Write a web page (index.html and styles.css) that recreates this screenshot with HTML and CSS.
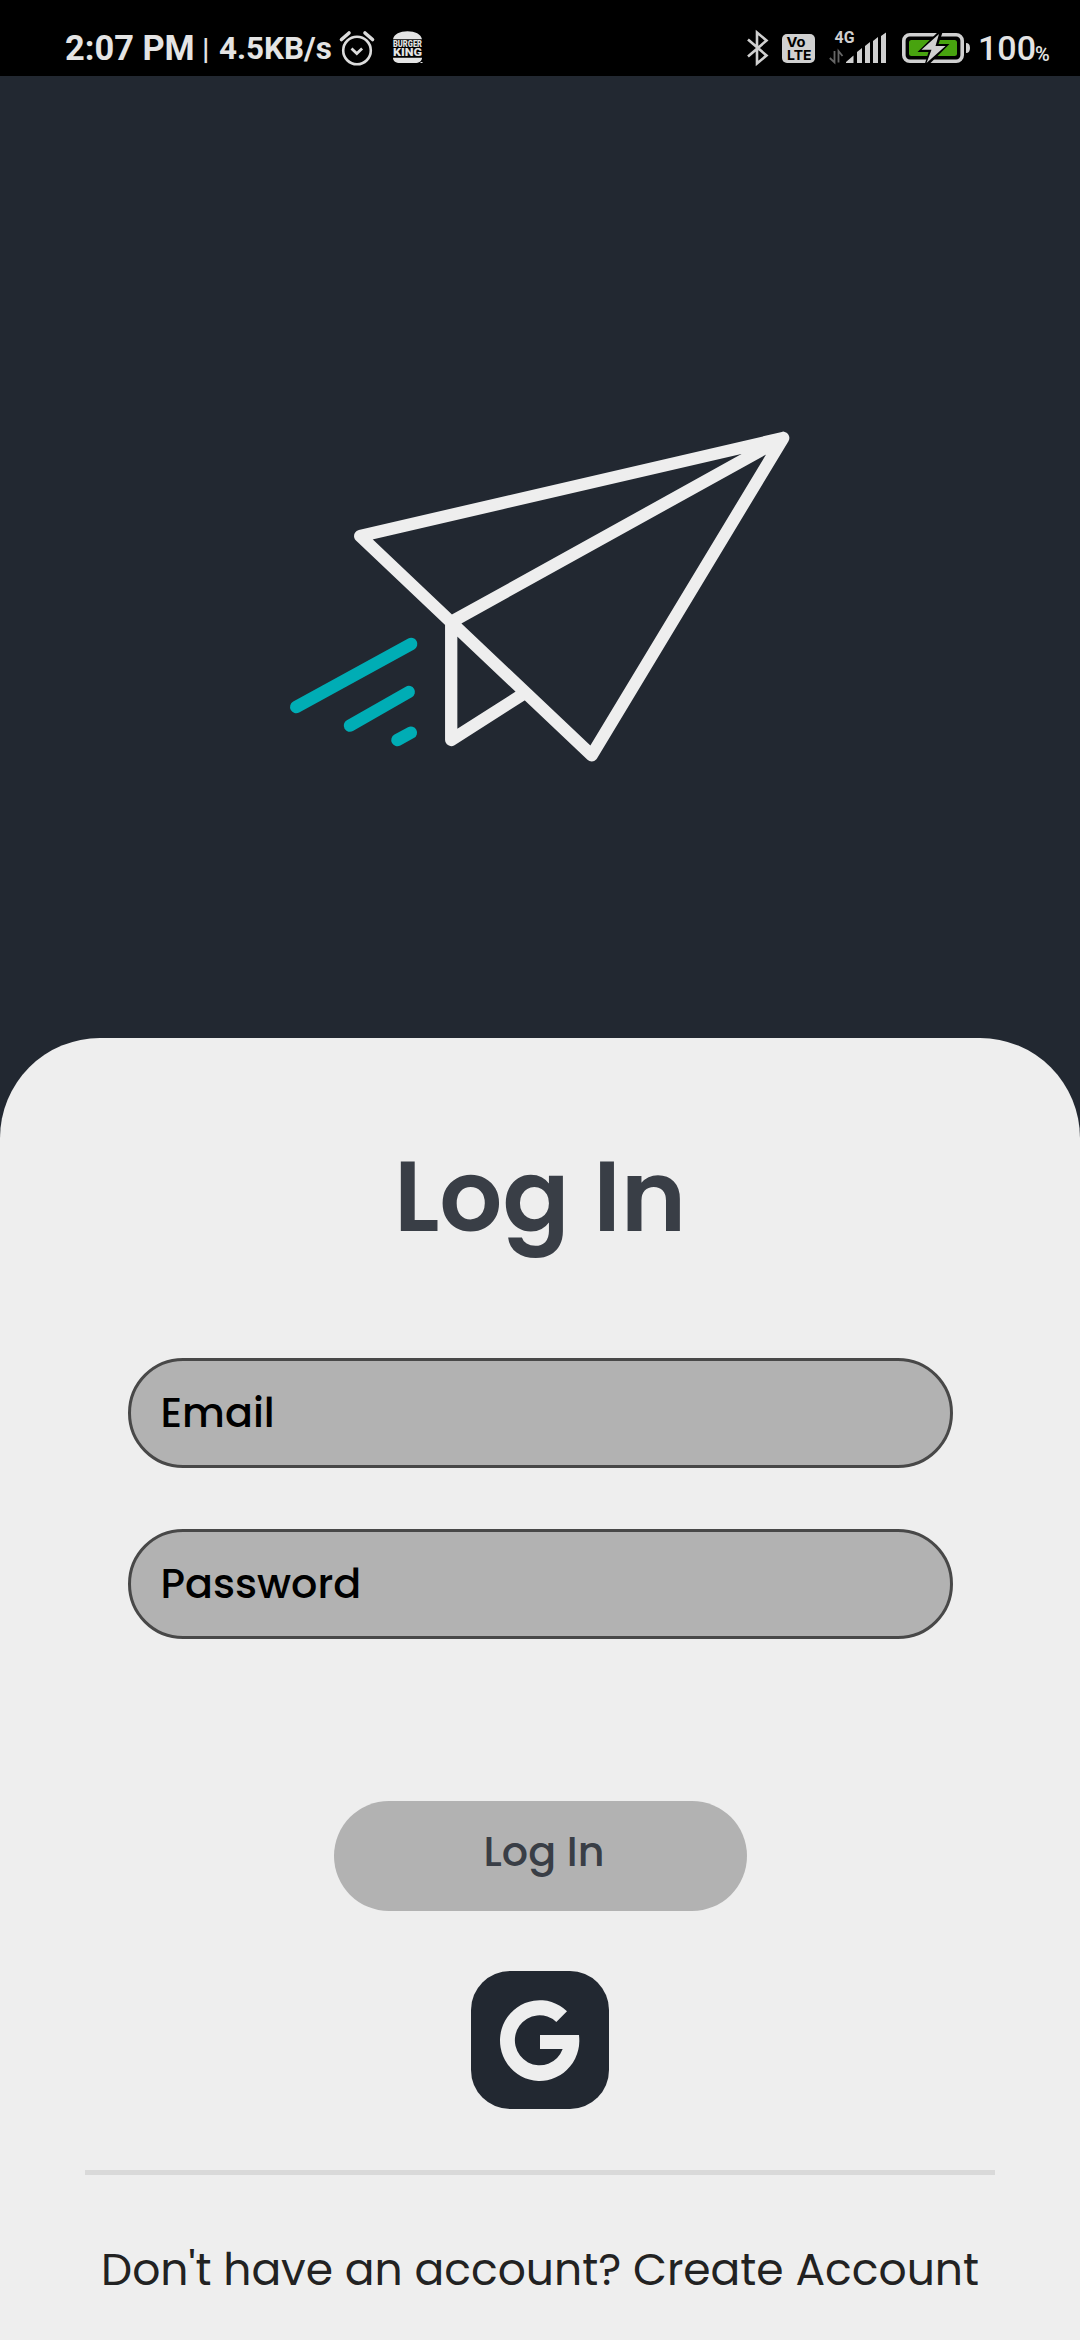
FILE: index.html
```html
<!DOCTYPE html>
<html lang="en">
<head>
<meta charset="utf-8">
<title>Log In</title>
<link rel="stylesheet" href="styles.css">
</head>
<body>
<div class="app">
  <header class="status">
    <span class="status-time">2:07 PM</span>
    <span class="status-sep">|</span>
    <span class="status-rate">4.5KB/s</span>
    <svg class="icon-alarm" viewBox="0 0 36 36" width="36" height="36" fill="none" stroke="#dcdcdc">
      <circle cx="18" cy="20.5" r="13.8" stroke-width="2.6"/>
      <path d="M12.5 18.5l5.300 5 5.300-5" stroke-width="2.8"/>
      <path d="M2.500 9.500l7.500-6.500M33.500 9.500l-7.500-6.500" stroke-width="3.600" stroke-linecap="round"/>
    </svg>
    <svg class="icon-burger" viewBox="0 0 32 34" width="32" height="34" fill="#e4e4e4">
      <path d="M1 8.300C2 3 8 .3 15.500 .3S29 3 30 8.300zM1 26.700h29c0 3.500-3 5.300-7 5.300H8c-4 0-7-1.800-7-5.300zM28.500 31h2v1h-2z"/>
      <text x="1" y="16" font-size="8.600" textLength="29" lengthAdjust="spacingAndGlyphs">BURGER</text>
      <text x="1" y="25.200" font-size="11.400" textLength="29" lengthAdjust="spacingAndGlyphs">KING</text>
    </svg>
    <svg class="icon-bluetooth" viewBox="0 0 22 36" width="22" height="36" fill="none" stroke="#d0d0d0" stroke-width="2.600">
      <path d="M1 9.500l18.500 16L10 33.500V2.500L19.500 10.500 1 26.500"/>
    </svg>
    <svg class="icon-volte" viewBox="0 0 33 29" width="33" height="29">
      <rect width="33" height="29" rx="5" fill="#d0d0d0"/>
      <text x="4.500" y="13" font-size="13" textLength="19" lengthAdjust="spacingAndGlyphs">Vo</text>
      <text x="5" y="26" font-size="13.500" textLength="24.500" lengthAdjust="spacingAndGlyphs">LTE</text>
    </svg>
    <svg class="icon-signal" viewBox="0 0 58 34" width="58" height="34" fill="#d0d0d0">
      <text x="5.500" y="12" font-size="16" textLength="20" lengthAdjust="spacingAndGlyphs">4G</text>
      <path d="M5.500 20v11.500L.8 27M9.500 31.500V20l4 5" fill="none" stroke="#666" stroke-width="1.800"/>
      <path d="M17 32v-1l7.500-6.500V32zM28 21l5-4v15h-5zM36 15l5-4v21h-5zM44 10l5-4v26h-5zM52 5l5-3.500V32h-5z"/>
    </svg>
    <svg class="icon-battery" viewBox="0 0 68 34" width="68" height="34">
      <rect x="1.800" y="3.800" width="58.400" height="26.400" rx="6" fill="none" stroke="#d0d0d0" stroke-width="3.600"/>
      <rect x="7" y="9" width="48" height="16" rx="2.500" fill="#48a30f"/>
      <path d="M64 12q4 0 4 5t-4 5z" fill="#d0d0d0"/>
      <path d="M37 0L15.500 21h11L22.500 34h4L47.500 13H36.500L41 0z" fill="#000"/>
      <path d="M37 3L19.500 18.800h10L24.500 32 43.500 15H33.500z" fill="#d0d0d0"/>
    </svg>
    <span class="status-level">100</span>
    <span class="status-percent">%</span>
  </header>

  <div class="hero">
    <svg class="plane" viewBox="280 420 520 350" width="520" height="350" fill="none" stroke-width="12.300" stroke-linecap="round" stroke-linejoin="round">
      <path stroke="#eee" d="M783.200 438L360.200 536 591.700 755.300zL451.200 622V740L525.600 692.500"/>
      <path stroke="#00adb5" d="M411.200 644L296.200 707M408.800 692L349.900 725.700M410.900 732.700L397.400 740"/>
    </svg>
  </div>

  <main class="panel">
    <h1 class="title">Log In</h1>
    <form class="form">
      <div class="field">Email</div>
      <div class="field">Password</div>
      <button class="submit" type="button">Log In</button>
    </form>
    <a class="google">
      <svg viewBox="453 573 414 414" width="138" height="138" fill="#eee">
        <path d="M741 694A119 121 0 1 0 778 783Q778 774 777 765H660V807H728A74 75 0 1 1 709 726Z"/>
      </svg>
    </a>
    <hr class="rule">
    <p class="signup">Don't have an account? Create Account</p>
  </main>
</div>
</body>
</html>
```
FILE: styles.css
```css
* { box-sizing: border-box; }

body {
  margin: 0;
  background: #222831;
}

.app {
  width: 1080px;
  height: 2340px;
  display: flex;
  flex-direction: column;
  overflow: hidden;
  font-family: Poppins, Inter, "Open Sans", sans-serif;
  font-feature-settings: "cv11" 1;
}

/* Status bar */
.status {
  height: 76px;
  flex: none;
  display: flex;
  align-items: center;
  padding: 20px 0 0 65px;
  background: #000;
  color: #e4e4e4;
  font-family: Roboto, sans-serif;
  font-weight: 700;
  white-space: nowrap;
}

.status > * { flex: none; }
.status svg { overflow: visible; }
.status-time { width: 137px; font-size: 34.400px; }
.status-sep { width: 17px; font-size: 30px; font-weight: 500; }
.status-rate { width: 120px; font-size: 31.400px; }
.icon-burger { margin-left: 17px; font-weight: 900; }
.icon-bluetooth { margin-left: 323px; }
.icon-volte { margin-left: 13px; font-family: Inter, sans-serif; }
.icon-signal { margin-left: 14px; }
.icon-battery { margin-left: 15px; }
.status-level { width: 57px; margin-left: 8px; font-size: 34px; font-weight: 500; }
.status-percent { padding-top: 12px; font-size: 20px; font-weight: 500; }

/* Illustration */
.hero {
  height: 962px;
  flex: none;
  display: flex;
  justify-content: center;
  align-items: flex-start;
  padding-top: 344px;
}

/* Login sheet */
.panel {
  flex: 1;
  display: flex;
  flex-direction: column;
  align-items: center;
  padding-top: 96px;
  background: #eee;
  border-radius: 100px 100px 0 0;
}

.title {
  margin: 0 0 99px;
  font-size: 99px;
  line-height: 125px;
  font-weight: 600;
  color: #393e46;
}

.form {
  display: flex;
  flex-direction: column;
  align-items: center;
}

.field {
  width: 825px;
  height: 110px;
  margin-bottom: 61px;
  padding: 0 0 1px 30px;
  display: flex;
  align-items: center;
  background: #b2b2b2;
  border: 3px solid #484848;
  border-radius: 56px;
  font-size: 41.250px;
  font-weight: 500;
  color: #000;
}

.submit {
  width: 413px;
  height: 110px;
  margin-top: 101px;
  padding: 0 0 9px 8px;
  border: 0;
  border-radius: 55px;
  background: #b2b2b2;
  color: #393e46;
  font: inherit;
  font-feature-settings: inherit;
  font-size: 41.250px;
  font-weight: 500;
}

.google {
  width: 138px;
  height: 138px;
  margin-top: 60px;
  border-radius: 39px;
  background: #222831;
}

.rule {
  width: 910px;
  height: 5px;
  margin: 61px 0 0;
  border: 0;
  background: #d9d9d9;
}

.signup {
  margin: 65px 0 0;
  font-size: 44px;
  line-height: 60px;
  color: #222;
  white-space: nowrap;
}
```
